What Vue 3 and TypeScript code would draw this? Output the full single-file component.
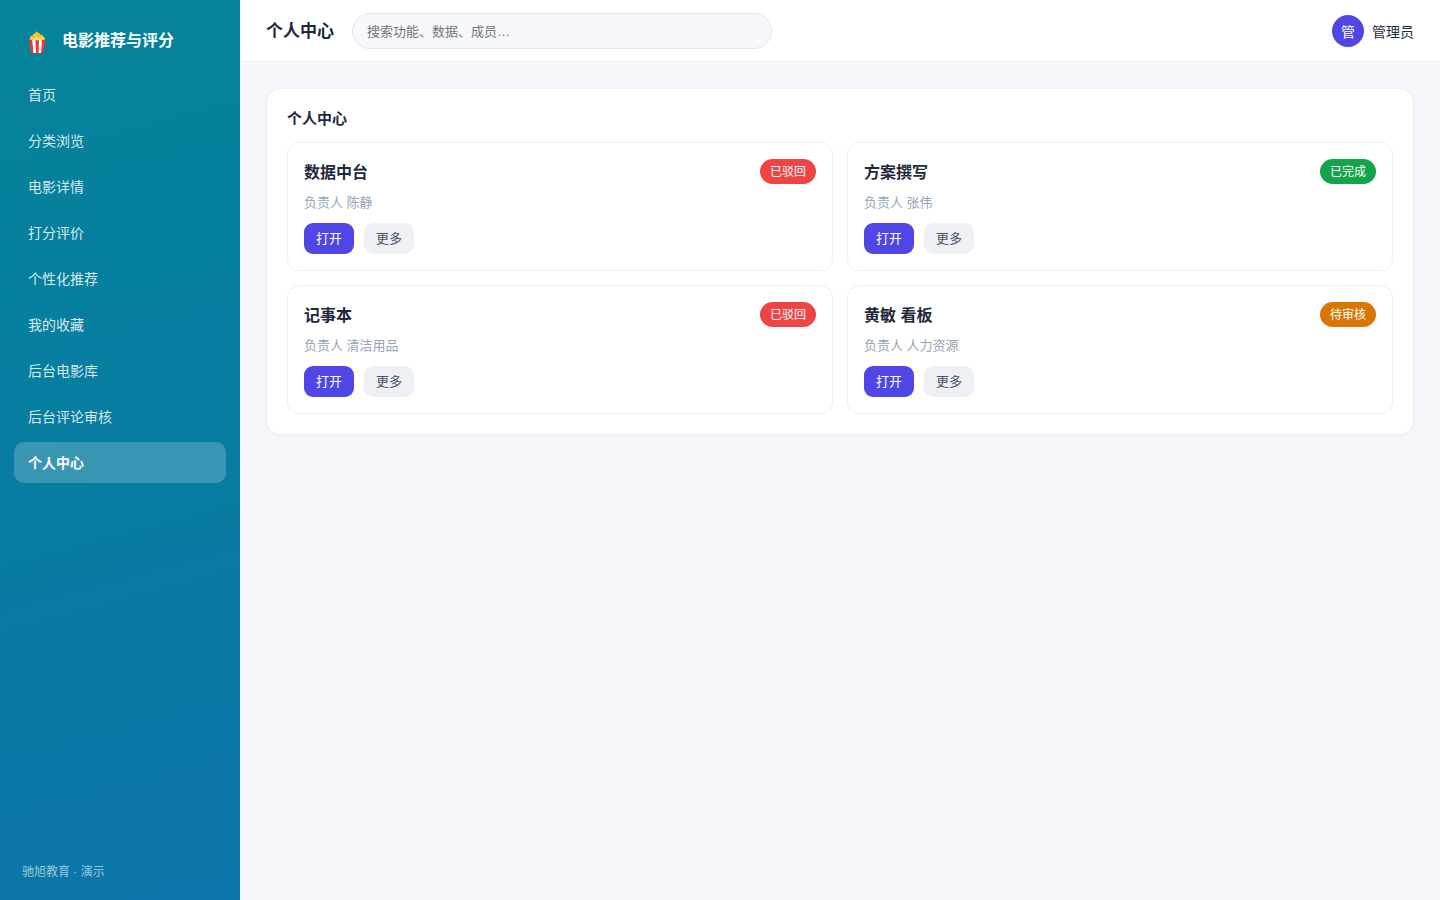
<script setup lang="ts">
import { ref } from 'vue'

interface Project {
  title: string
  owner: string
  status: string
  tone: 'danger' | 'success' | 'warning'
}

const navItems: string[] = [
  '首页',
  '分类浏览',
  '电影详情',
  '打分评价',
  '个性化推荐',
  '我的收藏',
  '后台电影库',
  '后台评论审核',
  '个人中心',
]
const active = ref('个人中心')
const keyword = ref('')

const projects: Project[] = [
  { title: '数据中台', owner: '陈静', status: '已驳回', tone: 'danger' },
  { title: '方案撰写', owner: '张伟', status: '已完成', tone: 'success' },
  { title: '记事本', owner: '清洁用品', status: '已驳回', tone: 'danger' },
  { title: '黄敏 看板', owner: '人力资源', status: '待审核', tone: 'warning' },
]
</script>

<template>
  <div class="layout">
    <aside class="sidebar">
      <div class="brand">
        <svg class="brand-icon" viewBox="0 0 18 22" aria-hidden="true">
          <path d="M1 8H17.4L15.3 22H3.2Z" fill="#f9322c" />
          <path d="M4.2 8H7.4L8 22H5.4Z" fill="#fff" />
          <path d="M11 8H14.2L13 22H10.6Z" fill="#fff" />
          <path d="M2 8.3 2.2 6 3.5 4.6 4.8 4.4 5.3 3 7.2 2.3 8.7 0.2 10.2 2 12 2.6 12.8 4 14.6 4.2 16 6.2 16.6 8.3Z" fill="#ffc42e" />
          <path d="M1.8 7.2 4 6.2 6 6.9 8.6 6 11 6.8 13.4 6 16.8 7.2 16.6 8.8H12L9.5 9.4 7 8.8H2.2Z" fill="#ffe36a" />
          <path d="M7.2 3.6l1 .6M10.4 3.4l1 .6M4.6 5.4l.9.3M12.6 5.1l.9.4M8.8 5.2l.8.3" stroke="#f2a51d" stroke-width=".8" />
        </svg>
        <span>电影推荐与评分</span>
      </div>
      <nav class="nav">
        <a
          v-for="item in navItems"
          :key="item"
          href="#"
          class="nav-link"
          :class="{ active: item === active }"
          :aria-current="item === active ? 'page' : undefined"
          @click.prevent="active = item"
        >{{ item }}</a>
      </nav>
      <div class="sidebar-foot">驰旭教育 · 演示</div>
    </aside>

    <div class="main">
      <header class="topbar">
        <h1>个人中心</h1>
        <input
          v-model="keyword"
          class="search"
          type="search"
          aria-label="搜索"
          placeholder="搜索功能、数据、成员…"
        />
        <div class="user">
          <span class="avatar">管</span>
          <span>管理员</span>
        </div>
      </header>

      <main class="content">
        <section class="panel">
          <h2>个人中心</h2>
          <div class="grid">
            <article v-for="project in projects" :key="project.title" class="card">
              <div class="card-head">
                <h3>{{ project.title }}</h3>
                <span class="badge" :class="project.tone">{{ project.status }}</span>
              </div>
              <p class="meta">负责人 {{ project.owner }}</p>
              <div class="actions">
                <button type="button" class="btn primary">打开</button>
                <button type="button" class="btn">更多</button>
              </div>
            </article>
          </div>
        </section>
      </main>
    </div>
  </div>
</template>

<style>
body {
  margin: 0;
  background: #f5f7fb;
}
</style>

<style scoped>
.layout,
.layout * {
  box-sizing: border-box;
}
.layout {
  display: flex;
  min-height: 100vh;
  color: #1e293b;
  background: #f5f7fb;
  font-family: "Liberation Sans", "Noto Sans CJK SC", sans-serif;
  font-size: 14px;
}
h1,
h2,
h3,
p {
  margin: 0;
}
.sidebar {
  display: flex;
  flex-direction: column;
  flex: none;
  width: 240px;
  padding: 20px 14px;
  color: #fff;
  background: linear-gradient(165deg, #058499 0%, #0b75a9 100%);
}
.brand {
  display: flex;
  align-items: center;
  gap: 16px;
  padding: 0 14px;
  margin-bottom: 12px;
  font-size: 16px;
  font-weight: 700;
  line-height: 42px;
}
.brand-icon {
  width: 18px;
  height: 22px;
  margin-top: 2px;
}
.nav {
  display: flex;
  flex-direction: column;
  gap: 5px;
}
.nav-link {
  padding: 12px 14px 10px;
  border-radius: 10px;
  color: rgba(255, 255, 255, 0.85);
  line-height: 19px;
  text-decoration: none;
}
.nav-link.active {
  color: #fff;
  font-weight: 700;
  background: rgba(255, 255, 255, 0.2);
}
.sidebar-foot {
  margin-top: auto;
  padding: 0 8px;
  color: rgba(255, 255, 255, 0.6);
  font-size: 12px;
  line-height: 16px;
}
.main {
  flex: 1;
  min-width: 0;
}
.topbar {
  display: flex;
  align-items: center;
  gap: 18px;
  padding: 13px 26px 12px;
  background: #fff;
  border-bottom: 1px solid #eeeff3;
}
h1 {
  padding-top: 2px;
  font-size: 17px;
  line-height: 24px;
}
.search {
  flex: 0 1 420px;
  min-width: 0;
  height: 36px;
  padding: 0 14px;
  border: 1px solid #e4e6ef;
  border-radius: 18px;
  outline: none;
  color: #1e293b;
  background: #f7f8fc;
  font-family: inherit;
  font-size: 13px;
  appearance: none;
}
.search::placeholder {
  color: #757575;
}
.user {
  display: flex;
  align-items: center;
  gap: 8px;
  margin-left: auto;
}
.avatar {
  display: grid;
  place-items: center;
  width: 32px;
  height: 32px;
  border-radius: 50%;
  color: #fff;
  background: #4f46e5;
}
.content {
  padding: 26px;
}
.panel {
  padding: 20px;
  border: 1px solid #f0f1f5;
  border-radius: 14px;
  background: #fff;
  box-shadow: 0 1px 4px rgba(30, 41, 90, 0.05);
}
h2 {
  margin-bottom: 14px;
  font-size: 15px;
  line-height: 19px;
}
.grid {
  display: grid;
  grid-template-columns: repeat(2, minmax(0, 1fr));
  gap: 14px;
}
.card {
  padding: 16px;
  border: 1px solid #eeeff2;
  border-radius: 12px;
}
.card-head {
  display: flex;
  align-items: center;
  justify-content: space-between;
}
h3 {
  padding-top: 2px;
  font-size: 16px;
  line-height: 23px;
}
.badge {
  padding: 1px 10px 0;
  border-radius: 13px;
  color: #fff;
  font-size: 12px;
  line-height: 24px;
}
.badge.danger {
  background: #ef4444;
}
.badge.success {
  background: #16a34a;
}
.badge.warning {
  background: #d97706;
}
.meta {
  margin: 8px 0 10px;
  color: #94a3b8;
  font-size: 13px;
  line-height: 21px;
}
.actions {
  display: flex;
  gap: 10px;
}
.btn {
  padding: 0 12px;
  border: 0;
  border-radius: 9px;
  color: #475569;
  background: #eef0f4;
  font-family: inherit;
  font-size: 13px;
  line-height: 31px;
  cursor: pointer;
}
.btn.primary {
  color: #fff;
  background: #4f46e5;
}
</style>
